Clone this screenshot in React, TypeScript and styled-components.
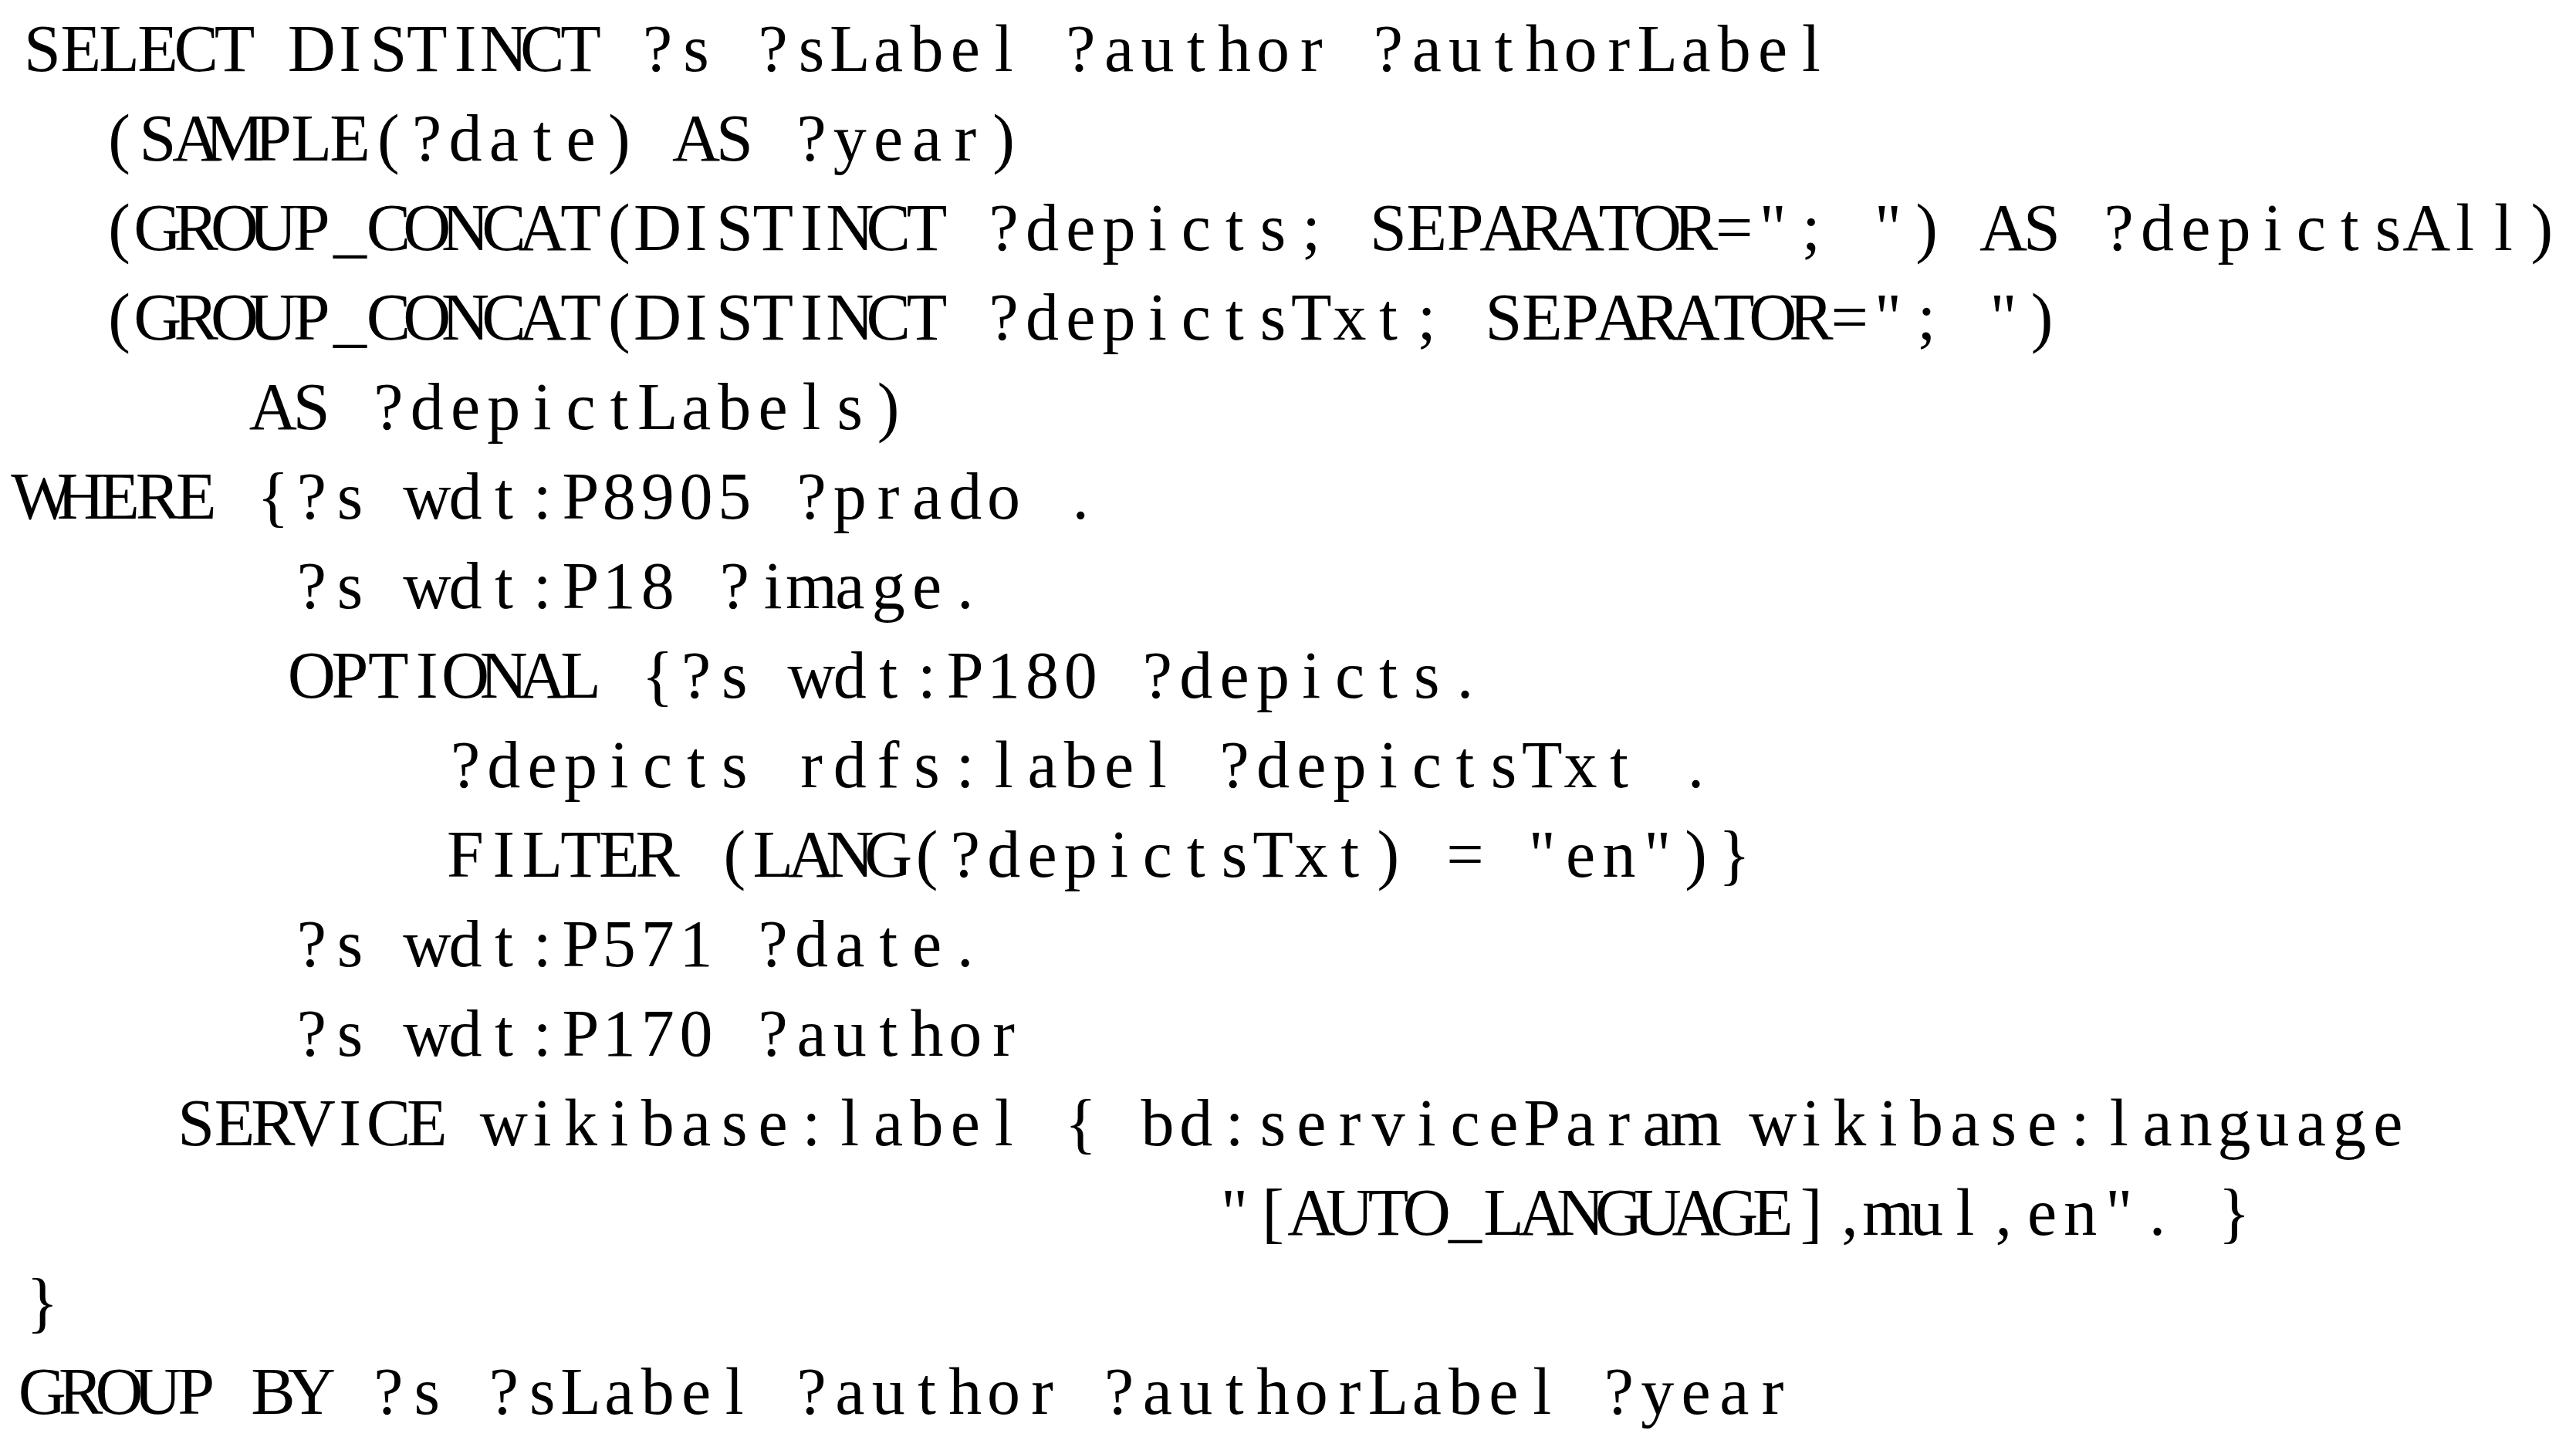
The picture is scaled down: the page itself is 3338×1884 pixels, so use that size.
import React from "react";
import styled, { createGlobalStyle } from "styled-components";

const COL = 49.83;
const LINE_H = 116;

const GlobalStyle = createGlobalStyle`
  html, body {
    margin: 0;
    padding: 0;
    background: #ffffff;
  }
  body {
    font-family: "Liberation Serif", "Times New Roman", serif;
    color: #000000;
  }
`;

const Listing = styled.div`
  display: flex;
  flex-direction: column;
  padding: 5px 0 0 30px;
  background: #ffffff;
  font-family: "Liberation Serif", "Times New Roman", serif;
  font-size: 86px;
  color: #000000;
`;

const CodeLine = styled.div<{ $indent: number }>`
  display: flex;
  flex-direction: row;
  height: ${LINE_H}px;
  line-height: ${LINE_H}px;
  padding-left: ${(p) => p.$indent * COL}px;
`;

const Column = styled.span`
  flex: 0 0 ${COL}px;
  width: ${COL}px;
  display: flex;
  justify-content: center;
  white-space: pre;
  line-height: ${LINE_H}px;
`;

const lines: [number, string][] = [
  [0, "SELECT DISTINCT ?s ?sLabel ?author ?authorLabel"],
  [2, "(SAMPLE(?date) AS ?year)"],
  [2, '(GROUP_CONCAT(DISTINCT ?depicts; SEPARATOR="; ") AS ?depictsAll)'],
  [2, '(GROUP_CONCAT(DISTINCT ?depictsTxt; SEPARATOR="; ")'],
  [6, "AS ?depictLabels)"],
  [0, "WHERE {?s wdt:P8905 ?prado ."],
  [7, "?s wdt:P18 ?image."],
  [7, "OPTIONAL {?s wdt:P180 ?depicts."],
  [11, "?depicts rdfs:label ?depictsTxt ."],
  [11, 'FILTER (LANG(?depictsTxt) = "en")}'],
  [7, "?s wdt:P571 ?date."],
  [7, "?s wdt:P170 ?author"],
  [4, "SERVICE wikibase:label { bd:serviceParam wikibase:language"],
  [31, '"[AUTO_LANGUAGE],mul,en". }'],
  [0, "}"],
  [0, "GROUP BY ?s ?sLabel ?author ?authorLabel ?year"],
];

export default function App() {
  return (
    <>
      <GlobalStyle />
      <Listing>
        {lines.map(([indent, text], i) => (
          <CodeLine key={i} $indent={indent}>
            {Array.from(text).map((ch, j) => (
              <Column key={j}>{ch}</Column>
            ))}
          </CodeLine>
        ))}
      </Listing>
    </>
  );
}
